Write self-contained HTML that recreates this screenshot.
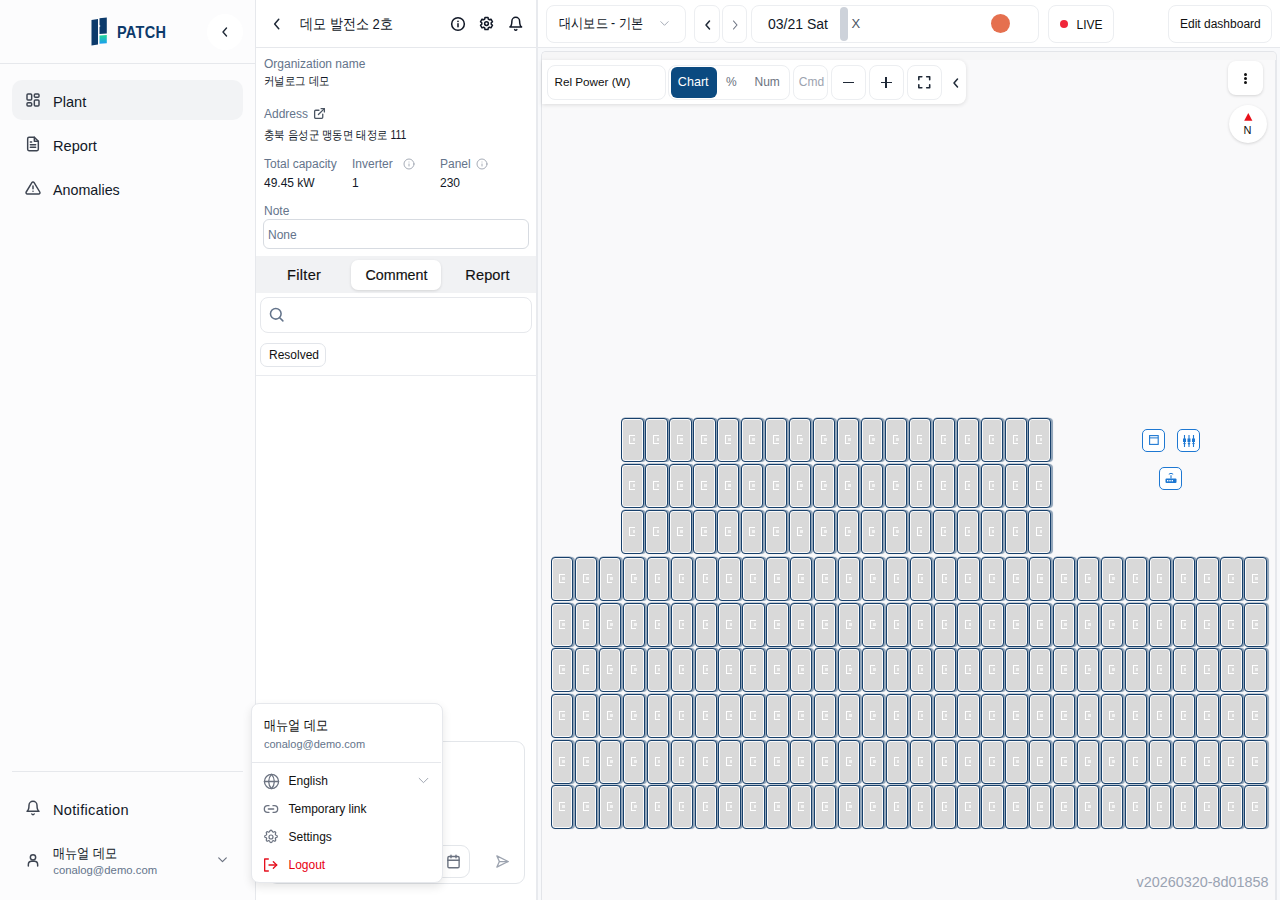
<!DOCTYPE html>
<html><head><meta charset="utf-8">
<style>
*{box-sizing:border-box;margin:0;padding:0}
html,body{width:1280px;height:900px;overflow:hidden;background:#fff;font-family:"Liberation Sans",sans-serif;color:#111}
.a{position:absolute}
.t{position:absolute;white-space:nowrap;line-height:1}
svg.i{position:absolute;overflow:visible;fill:none;stroke:currentColor;stroke-linecap:round;stroke-linejoin:round}
#sb{left:0;top:0;width:256px;height:900px;background:#fcfcfd;border-right:1px solid #e6e8ec}
#ip{left:256px;top:0;width:282px;height:900px;background:#fff;border-right:2px solid #e8eaee}
#mn{left:538px;top:0;width:742px;height:900px;background:#f8f9fb}
.box{position:absolute;background:#fff;border:1px solid #eceef1;border-radius:8px}
.g{color:#64748b}
.p{position:absolute;width:22.4px;height:44.2px;background:#d9d9d9;border:1.3px solid #17406b;border-radius:4px;box-shadow:inset 0 0 0 1px #fafafa,1.3px 0 0.7px #8fa3b8,0.3px -0.6px 0.5px #8fa3b8}
.p::after{content:"";box-sizing:border-box;position:absolute;left:7px;top:16.2px;width:5.5px;height:9px;border:1.7px solid #fff;border-right:0}
.p::before{content:"";position:absolute;left:10.3px;top:19px;width:2.5px;height:3px;background:#f2f2f2}
.k{transform:scaleX(0.87);transform-origin:0 0}
</style></head><body>

<!-- SIDEBAR -->
<div id="sb" class="a">
  <div class="a" style="left:0;top:63px;width:255px;height:1px;background:#e6e8ec"></div>
  <!-- logo -->
  <svg class="a" style="left:91px;top:17px" width="17" height="29" viewBox="0 0 17 29">
    <path d="M0.5 3 L7 2 L7 27.5 L0.5 28.5 Z" fill="#0c3a6b"/>
    <path d="M8.5 1.2 L15.8 0.6 L15.8 16.5 L8.5 17 L8.5 10 L9.5 9 L8.5 8 Z" fill="#0c3a6b"/>
    <defs><linearGradient id="lg" x1="0" y1="0" x2="0" y2="1"><stop offset="0" stop-color="#22d896"/><stop offset="1" stop-color="#1b9cf2"/></linearGradient></defs>
    <path d="M8.5 18.5 L15.8 18 L15.8 26.2 L8.5 26.8 Z" fill="url(#lg)"/>
  </svg>
  <div class="t" style="left:117px;top:23.8px;font-size:16.5px;font-weight:bold;color:#0c3a6b;transform:scaleX(0.88);transform-origin:0 0;letter-spacing:0.3px">PATCH</div>
  <div class="a" style="left:207px;top:14px;width:36px;height:36px;border-radius:50%;background:#fff"></div>
  <svg class="i" style="left:219px;top:26px;color:#1f2937" width="12" height="12" viewBox="0 0 24 24" stroke-width="2.8"><path d="M15 4 L8 12 L15 20"/></svg>

  <!-- nav -->
  <div class="a" style="left:12px;top:80px;width:231px;height:40px;border-radius:10px;background:#f2f3f5"></div>
  <svg class="i" style="left:25px;top:92px;color:#3d4451" width="16" height="16" viewBox="0 0 24 24" stroke-width="2.2">
    <rect x="3" y="3" width="7" height="9" rx="1.5"/><rect x="14" y="3" width="7" height="5" rx="1.5"/><rect x="14" y="12" width="7" height="9" rx="1.5"/><rect x="3" y="16" width="7" height="5" rx="1.5"/></svg>
  <div class="t" style="left:53px;top:95px;font-size:14.6px;color:#111827">Plant</div>

  <svg class="i" style="left:24.5px;top:136px;color:#3d4451" width="16" height="16" viewBox="0 0 24 24" stroke-width="2.2">
    <path d="M14 2H6a2 2 0 0 0-2 2v16a2 2 0 0 0 2 2h12a2 2 0 0 0 2-2V8z"/><path d="M14 2v6h6"/><path d="M16 13H8"/><path d="M16 17H8"/><path d="M10 9H8"/></svg>
  <div class="t" style="left:53px;top:138.8px;font-size:14.6px;color:#111827">Report</div>

  <svg class="i" style="left:24.5px;top:180px;color:#3d4451" width="16" height="16" viewBox="0 0 24 24" stroke-width="2.2">
    <path d="M10.3 3.9 1.8 18a2 2 0 0 0 1.7 3h17a2 2 0 0 0 1.7-3L13.7 3.9a2 2 0 0 0-3.4 0z"/><path d="M12 9v4"/><path d="M12 17h.01"/></svg>
  <div class="t" style="left:53px;top:182.8px;font-size:14.3px;color:#111827">Anomalies</div>

  <div class="a" style="left:12px;top:771px;width:231px;height:1px;background:#e6e8ec"></div>
  <svg class="i" style="left:25px;top:800px;color:#3d4451" width="16" height="16" viewBox="0 0 24 24" stroke-width="2.2">
    <path d="M6 8a6 6 0 0 1 12 0c0 7 3 9 3 9H3s3-2 3-9"/><path d="M10.3 21a1.94 1.94 0 0 0 3.4 0"/></svg>
  <div class="t" style="left:53px;top:802.6px;font-size:14.6px;color:#111827;letter-spacing:0.3px">Notification</div>

  <svg class="i" style="left:25px;top:852px;color:#3d4451" width="16" height="16" viewBox="0 0 24 24" stroke-width="2.2">
    <circle cx="12" cy="8" r="4"/><path d="M5 21v-2a5 5 0 0 1 5-5h4a5 5 0 0 1 5 5v2"/></svg>
  <div class="t k" style="left:53px;top:846px;font-size:14px;color:#111827">매뉴얼 데모</div>
  <div class="t g" style="left:53.3px;top:865px;font-size:11.3px">conalog@demo.com</div>
  <svg class="i" style="left:216px;top:853px;color:#6b7280" width="13" height="13" viewBox="0 0 24 24" stroke-width="2.2"><path d="M5 9l7 7 7-7"/></svg>
</div>

<!-- INFO PANEL -->
<div id="ip" class="a">
  <div class="a" style="left:0;top:47px;width:280px;height:1px;background:#e6e8ec"></div>
  <svg class="i" style="left:14px;top:17px;color:#1f2937" width="14" height="14" viewBox="0 0 24 24" stroke-width="2.6"><path d="M15 4 L8 12 L15 20"/></svg>
  <div class="t k" style="left:44px;top:16px;font-size:15px;color:#111827">데모 발전소 2호</div>
  <svg class="i" style="left:194px;top:15.7px;color:#111827" width="16" height="16" viewBox="0 0 24 24" stroke-width="2.3"><circle cx="12" cy="12" r="9.5"/><path d="M12 16v-4.5"/><path d="M12 8h.01" stroke-width="2.6"/></svg>
  <svg class="i" style="left:222.5px;top:15.5px;color:#111827" width="15" height="15" viewBox="0 0 24 24" stroke-width="2.4"><path d="M9.15 4.95 L9.58 2.30 L14.42 2.30 L14.85 4.95 L16.68 6.01 L19.19 5.05 L21.61 9.24 L19.53 10.94 L19.53 13.06 L21.61 14.76 L19.19 18.95 L16.68 17.99 L14.85 19.05 L14.42 21.70 L9.58 21.70 L9.15 19.05 L7.32 17.99 L4.81 18.95 L2.39 14.76 L4.47 13.06 L4.47 10.94 L2.39 9.24 L4.81 5.05 L7.32 6.01Z"/><circle cx="12" cy="12" r="3"/></svg>
  <svg class="i" style="left:251.8px;top:16px;color:#111827" width="15.5" height="15.5" viewBox="0 0 24 24" stroke-width="2.3"><path d="M6 8a6 6 0 0 1 12 0c0 7 3 9 3 9H3s3-2 3-9"/><path d="M10.3 21a1.94 1.94 0 0 0 3.4 0"/></svg>

  <div class="t g" style="left:8px;top:57.8px;font-size:12px">Organization name</div>
  <div class="t k" style="left:8px;top:75px;font-size:12px;color:#111827">커널로그 데모</div>
  <div class="t g" style="left:8px;top:108.3px;font-size:12px">Address</div>
  <svg class="i" style="left:57px;top:107px;color:#4b5563" width="13" height="13" viewBox="0 0 24 24" stroke-width="2.4"><path d="M18 13v6a2 2 0 0 1-2 2H5a2 2 0 0 1-2-2V8a2 2 0 0 1 2-2h6"/><path d="M15 3h6v6"/><path d="M10 14 21 3"/></svg>
  <div class="t k" style="left:8px;top:128.5px;font-size:12px;color:#111827">충북 음성군 맹동면 태정로 111</div>

  <div class="t g" style="left:8px;top:158.3px;font-size:12px">Total capacity</div>
  <div class="t g" style="left:96px;top:158.3px;font-size:12px">Inverter</div>
  <svg class="i" style="left:146.5px;top:157.8px;color:#9ca3af" width="12" height="12" viewBox="0 0 24 24" stroke-width="1.8"><circle cx="12" cy="12" r="10"/><path d="M12 16v-4"/><path d="M12 8h.01"/></svg>
  <div class="t g" style="left:184px;top:158.3px;font-size:12px">Panel</div>
  <svg class="i" style="left:219.7px;top:157.8px;color:#9ca3af" width="12" height="12" viewBox="0 0 24 24" stroke-width="1.8"><circle cx="12" cy="12" r="10"/><path d="M12 16v-4"/><path d="M12 8h.01"/></svg>
  <div class="t" style="left:8px;top:176.5px;font-size:12px;color:#111827">49.45 kW</div>
  <div class="t" style="left:96px;top:176.5px;font-size:12px;color:#111827">1</div>
  <div class="t" style="left:184px;top:176.5px;font-size:12px;color:#111827">230</div>

  <div class="t g" style="left:8px;top:204.5px;font-size:12px">Note</div>
  <div class="a" style="left:7px;top:219px;width:266px;height:30px;border:1px solid #d7dbe1;border-radius:6px"></div>
  <div class="t g" style="left:12px;top:228.5px;font-size:12px">None</div>

  <div class="a" style="left:0;top:256px;width:280px;height:37px;background:#f1f2f4"></div>
  <div class="a" style="left:95px;top:260px;width:90px;height:30px;background:#fff;border-radius:7px;box-shadow:0 1px 3px rgba(0,0,0,0.12)"></div>
  <div class="t" style="left:31px;top:268.2px;font-size:14.6px;color:#111;-webkit-text-stroke:0.15px #111;letter-spacing:0.3px">Filter</div>
  <div class="t" style="left:109.5px;top:268.2px;font-size:14.3px;color:#111;-webkit-text-stroke:0.15px #111">Comment</div>
  <div class="t" style="left:209.3px;top:268.2px;font-size:14.6px;color:#111;-webkit-text-stroke:0.15px #111;letter-spacing:0.1px">Report</div>

  <div class="a" style="left:4px;top:297px;width:271.5px;height:36px;border:1px solid #e6e8ec;border-radius:8px"></div>
  <svg class="i" style="left:11.8px;top:306px;color:#64748b" width="17" height="17" viewBox="0 0 24 24" stroke-width="2.2"><circle cx="11" cy="11" r="7.5"/><path d="M21 21l-4.5-4.5"/></svg>
  <div class="a" style="left:4px;top:343px;width:66px;height:24px;border:1px solid #e2e5ea;border-radius:7px"></div>
  <div class="t" style="left:13px;top:348.8px;font-size:12px;color:#111">Resolved</div>
  <div class="a" style="left:0;top:375px;width:280px;height:1px;background:#e9ebef"></div>

  <!-- comment box -->
  <div class="a" style="left:12px;top:741px;width:256.5px;height:143px;border:1px solid #e3e6ea;border-radius:9px"></div>
  <div class="a" style="left:146px;top:845px;width:68px;height:33px;border:1px solid #e3e6ea;border-radius:9px"></div>
  <svg class="i" style="left:189.5px;top:853.8px;color:#6b7280" width="15" height="15" viewBox="0 0 24 24" stroke-width="2.2"><rect x="3" y="4" width="18" height="18" rx="2"/><path d="M16 2v4M8 2v4M3 10h18"/></svg>
  <svg class="i" style="left:239px;top:854px;color:#9ca3af" width="15" height="15" viewBox="0 0 24 24" stroke-width="2"><path d="M3 3l18 9-18 9 4-9z"/><path d="M7 12h14"/></svg>
</div>

<!-- MAIN -->
<div id="mn" class="a">
  <div class="a" style="left:0;top:0;width:742px;height:48px;background:#fff;border-bottom:1px solid #e6e8ec"></div>
  <!-- header -->
  <div class="box" style="left:8px;top:4.5px;width:139.5px;height:38px"></div>
  <div class="t k" style="left:21px;top:16px;font-size:14px;color:#111827">대시보드 - 기본</div>
  <svg class="i" style="left:121px;top:18px;color:#9ca3af" width="11" height="11" viewBox="0 0 24 24" stroke-width="2"><path d="M4 8l8 8 8-8"/></svg>
  <div class="box" style="left:156px;top:4.5px;width:25.5px;height:38px;border-radius:7px"></div>
  <svg class="i" style="left:163.5px;top:19px;color:#1f2937" width="12" height="12" viewBox="0 0 24 24" stroke-width="3"><path d="M15 4 L8 12 L15 20"/></svg>
  <div class="box" style="left:183.8px;top:4.5px;width:25px;height:38px;border-radius:7px"></div>
  <svg class="i" style="left:190.5px;top:18.5px;color:#6b7280" width="12" height="12" viewBox="0 0 24 24" stroke-width="2.2"><path d="M9 4 L16 12 L9 20"/></svg>
  <div class="box" style="left:213px;top:4.5px;width:288px;height:38px"></div>
  <div class="t" style="left:230px;top:17px;font-size:14px;color:#111827">03/21 Sat</div>
  <div class="a" style="left:302px;top:7px;width:7.5px;height:33.5px;border-radius:4px;background:#cdd2da"></div>
  <div class="t" style="left:313.5px;top:17px;font-size:13px;color:#4b5563">X</div>
  <div class="a" style="left:453px;top:14px;width:19px;height:19px;border-radius:50%;background:#e5704f"></div>
  <div class="box" style="left:509.5px;top:4.5px;width:66.5px;height:38px"></div>
  <div class="a" style="left:522px;top:19.5px;width:8px;height:8px;border-radius:50%;background:#f0263a"></div>
  <div class="t" style="left:538.5px;top:18.5px;font-size:12px;color:#111">LIVE</div>
  <div class="box" style="left:629.5px;top:4.5px;width:104px;height:38px"></div>
  <div class="t" style="left:642px;top:18.2px;font-size:12px;color:#111">Edit dashboard</div>

  <!-- map container -->
  <div class="a" style="left:3px;top:51px;width:736px;height:860px;background:#f9f9fa;border:1px solid #e3e5e9;border-right:2px solid #e6e8ec;border-radius:5px"></div>
  <div class="a" style="left:4px;top:52px;width:734px;height:8px;background:#f6f6f7;border-radius:4px 4px 0 0"></div>
  <!-- toolbar -->
  <div class="a" style="left:4px;top:60px;width:423.5px;height:44px;background:#fff;border-radius:0 8px 8px 0;box-shadow:0 1px 4px rgba(0,0,0,0.12)"></div>
  <div class="box" style="left:8.5px;top:64.5px;width:119px;height:35px"></div>
  <div class="t" style="left:16.5px;top:75.8px;font-size:11.7px;color:#111">Rel Power (W)</div>
  <div class="box" style="left:130px;top:64.5px;width:121.5px;height:35px"></div>
  <div class="a" style="left:132.75px;top:67px;width:46.25px;height:30.5px;border-radius:6px;background:#0b4a80"></div>
  <div class="t" style="left:139.8px;top:76.1px;font-size:12.6px;color:#fff">Chart</div>
  <div class="t" style="left:188px;top:76px;font-size:12px;color:#6b7280">%</div>
  <div class="t" style="left:216.5px;top:76px;font-size:12px;color:#6b7280">Num</div>
  <div class="box" style="left:255px;top:64.5px;width:35px;height:35px"></div>
  <div class="t" style="left:260.75px;top:76px;font-size:12px;color:#9ca3af">Cmd</div>
  <div class="box" style="left:292.75px;top:64.5px;width:35px;height:35px"></div>
  <div class="a" style="left:305px;top:81.6px;width:11px;height:1.6px;background:#1f2937"></div>
  <div class="box" style="left:330.75px;top:64.5px;width:35px;height:35px"></div>
  <div class="a" style="left:342.5px;top:81.7px;width:11px;height:1.6px;background:#1f2937"></div>
  <div class="a" style="left:347.2px;top:76.9px;width:1.6px;height:11px;background:#1f2937"></div>
  <div class="box" style="left:368.75px;top:64.5px;width:35px;height:35px"></div>
  <svg class="i" style="left:379px;top:75.2px;color:#1f2937" width="14.5" height="14.5" viewBox="0 0 24 24" stroke-width="2.6" stroke-linecap="butt"><path d="M3 8V3h5M16 3h5v5M21 16v5h-5M8 21H3v-5"/></svg>
  <svg class="i" style="left:412px;top:76.5px;color:#1f2937" width="12" height="12" viewBox="0 0 24 24" stroke-width="3"><path d="M15 4 L8 12 L15 20"/></svg>

  <div class="a" style="left:690px;top:61px;width:35px;height:34px;background:#fff;border-radius:8px;box-shadow:0 1px 3px rgba(0,0,0,0.15)"></div>
  <div class="a" style="left:706px;top:72.5px;width:3px;height:3px;border-radius:50%;background:#111"></div>
  <div class="a" style="left:706px;top:76.5px;width:3px;height:3px;border-radius:50%;background:#111"></div>
  <div class="a" style="left:706px;top:80.5px;width:3px;height:3px;border-radius:50%;background:#111"></div>
  <div class="a" style="left:690.5px;top:105px;width:38px;height:38px;background:#fff;border-radius:50%;box-shadow:0 1px 3px rgba(0,0,0,0.15)"></div>
  <svg class="a" style="left:705.5px;top:113px" width="9" height="8" viewBox="0 0 9 8"><path d="M4.3 0 L8.4 7.7 L0.2 7.7 Z" fill="#e8101a"/></svg>
  <div class="t" style="left:705.5px;top:124.9px;font-size:11px;color:#111">N</div>

  <div class="t" style="left:598.5px;top:874.8px;font-size:14.4px;color:#9aa3b2;letter-spacing:0px">v20260320-8d01858</div>
<div class="p" style="left:83.30px;top:418.30px"></div>
<div class="p" style="left:107.25px;top:418.30px"></div>
<div class="p" style="left:131.20px;top:418.30px"></div>
<div class="p" style="left:155.15px;top:418.30px"></div>
<div class="p" style="left:179.10px;top:418.30px"></div>
<div class="p" style="left:203.05px;top:418.30px"></div>
<div class="p" style="left:227.00px;top:418.30px"></div>
<div class="p" style="left:250.95px;top:418.30px"></div>
<div class="p" style="left:274.90px;top:418.30px"></div>
<div class="p" style="left:298.85px;top:418.30px"></div>
<div class="p" style="left:322.80px;top:418.30px"></div>
<div class="p" style="left:346.75px;top:418.30px"></div>
<div class="p" style="left:370.70px;top:418.30px"></div>
<div class="p" style="left:394.65px;top:418.30px"></div>
<div class="p" style="left:418.60px;top:418.30px"></div>
<div class="p" style="left:442.55px;top:418.30px"></div>
<div class="p" style="left:466.50px;top:418.30px"></div>
<div class="p" style="left:490.45px;top:418.30px"></div>
<div class="p" style="left:83.30px;top:464.30px"></div>
<div class="p" style="left:107.25px;top:464.30px"></div>
<div class="p" style="left:131.20px;top:464.30px"></div>
<div class="p" style="left:155.15px;top:464.30px"></div>
<div class="p" style="left:179.10px;top:464.30px"></div>
<div class="p" style="left:203.05px;top:464.30px"></div>
<div class="p" style="left:227.00px;top:464.30px"></div>
<div class="p" style="left:250.95px;top:464.30px"></div>
<div class="p" style="left:274.90px;top:464.30px"></div>
<div class="p" style="left:298.85px;top:464.30px"></div>
<div class="p" style="left:322.80px;top:464.30px"></div>
<div class="p" style="left:346.75px;top:464.30px"></div>
<div class="p" style="left:370.70px;top:464.30px"></div>
<div class="p" style="left:394.65px;top:464.30px"></div>
<div class="p" style="left:418.60px;top:464.30px"></div>
<div class="p" style="left:442.55px;top:464.30px"></div>
<div class="p" style="left:466.50px;top:464.30px"></div>
<div class="p" style="left:490.45px;top:464.30px"></div>
<div class="p" style="left:83.30px;top:510.20px"></div>
<div class="p" style="left:107.25px;top:510.20px"></div>
<div class="p" style="left:131.20px;top:510.20px"></div>
<div class="p" style="left:155.15px;top:510.20px"></div>
<div class="p" style="left:179.10px;top:510.20px"></div>
<div class="p" style="left:203.05px;top:510.20px"></div>
<div class="p" style="left:227.00px;top:510.20px"></div>
<div class="p" style="left:250.95px;top:510.20px"></div>
<div class="p" style="left:274.90px;top:510.20px"></div>
<div class="p" style="left:298.85px;top:510.20px"></div>
<div class="p" style="left:322.80px;top:510.20px"></div>
<div class="p" style="left:346.75px;top:510.20px"></div>
<div class="p" style="left:370.70px;top:510.20px"></div>
<div class="p" style="left:394.65px;top:510.20px"></div>
<div class="p" style="left:418.60px;top:510.20px"></div>
<div class="p" style="left:442.55px;top:510.20px"></div>
<div class="p" style="left:466.50px;top:510.20px"></div>
<div class="p" style="left:490.45px;top:510.20px"></div>
<div class="p" style="left:13.10px;top:556.90px"></div>
<div class="p" style="left:37.00px;top:556.90px"></div>
<div class="p" style="left:60.90px;top:556.90px"></div>
<div class="p" style="left:84.80px;top:556.90px"></div>
<div class="p" style="left:108.70px;top:556.90px"></div>
<div class="p" style="left:132.60px;top:556.90px"></div>
<div class="p" style="left:156.50px;top:556.90px"></div>
<div class="p" style="left:180.40px;top:556.90px"></div>
<div class="p" style="left:204.30px;top:556.90px"></div>
<div class="p" style="left:228.20px;top:556.90px"></div>
<div class="p" style="left:252.10px;top:556.90px"></div>
<div class="p" style="left:276.00px;top:556.90px"></div>
<div class="p" style="left:299.90px;top:556.90px"></div>
<div class="p" style="left:323.80px;top:556.90px"></div>
<div class="p" style="left:347.70px;top:556.90px"></div>
<div class="p" style="left:371.60px;top:556.90px"></div>
<div class="p" style="left:395.50px;top:556.90px"></div>
<div class="p" style="left:419.40px;top:556.90px"></div>
<div class="p" style="left:443.30px;top:556.90px"></div>
<div class="p" style="left:467.20px;top:556.90px"></div>
<div class="p" style="left:491.10px;top:556.90px"></div>
<div class="p" style="left:515.00px;top:556.90px"></div>
<div class="p" style="left:538.90px;top:556.90px"></div>
<div class="p" style="left:562.80px;top:556.90px"></div>
<div class="p" style="left:586.70px;top:556.90px"></div>
<div class="p" style="left:610.60px;top:556.90px"></div>
<div class="p" style="left:634.50px;top:556.90px"></div>
<div class="p" style="left:658.40px;top:556.90px"></div>
<div class="p" style="left:682.30px;top:556.90px"></div>
<div class="p" style="left:706.20px;top:556.90px"></div>
<div class="p" style="left:13.10px;top:602.58px"></div>
<div class="p" style="left:37.00px;top:602.58px"></div>
<div class="p" style="left:60.90px;top:602.58px"></div>
<div class="p" style="left:84.80px;top:602.58px"></div>
<div class="p" style="left:108.70px;top:602.58px"></div>
<div class="p" style="left:132.60px;top:602.58px"></div>
<div class="p" style="left:156.50px;top:602.58px"></div>
<div class="p" style="left:180.40px;top:602.58px"></div>
<div class="p" style="left:204.30px;top:602.58px"></div>
<div class="p" style="left:228.20px;top:602.58px"></div>
<div class="p" style="left:252.10px;top:602.58px"></div>
<div class="p" style="left:276.00px;top:602.58px"></div>
<div class="p" style="left:299.90px;top:602.58px"></div>
<div class="p" style="left:323.80px;top:602.58px"></div>
<div class="p" style="left:347.70px;top:602.58px"></div>
<div class="p" style="left:371.60px;top:602.58px"></div>
<div class="p" style="left:395.50px;top:602.58px"></div>
<div class="p" style="left:419.40px;top:602.58px"></div>
<div class="p" style="left:443.30px;top:602.58px"></div>
<div class="p" style="left:467.20px;top:602.58px"></div>
<div class="p" style="left:491.10px;top:602.58px"></div>
<div class="p" style="left:515.00px;top:602.58px"></div>
<div class="p" style="left:538.90px;top:602.58px"></div>
<div class="p" style="left:562.80px;top:602.58px"></div>
<div class="p" style="left:586.70px;top:602.58px"></div>
<div class="p" style="left:610.60px;top:602.58px"></div>
<div class="p" style="left:634.50px;top:602.58px"></div>
<div class="p" style="left:658.40px;top:602.58px"></div>
<div class="p" style="left:682.30px;top:602.58px"></div>
<div class="p" style="left:706.20px;top:602.58px"></div>
<div class="p" style="left:13.10px;top:648.26px"></div>
<div class="p" style="left:37.00px;top:648.26px"></div>
<div class="p" style="left:60.90px;top:648.26px"></div>
<div class="p" style="left:84.80px;top:648.26px"></div>
<div class="p" style="left:108.70px;top:648.26px"></div>
<div class="p" style="left:132.60px;top:648.26px"></div>
<div class="p" style="left:156.50px;top:648.26px"></div>
<div class="p" style="left:180.40px;top:648.26px"></div>
<div class="p" style="left:204.30px;top:648.26px"></div>
<div class="p" style="left:228.20px;top:648.26px"></div>
<div class="p" style="left:252.10px;top:648.26px"></div>
<div class="p" style="left:276.00px;top:648.26px"></div>
<div class="p" style="left:299.90px;top:648.26px"></div>
<div class="p" style="left:323.80px;top:648.26px"></div>
<div class="p" style="left:347.70px;top:648.26px"></div>
<div class="p" style="left:371.60px;top:648.26px"></div>
<div class="p" style="left:395.50px;top:648.26px"></div>
<div class="p" style="left:419.40px;top:648.26px"></div>
<div class="p" style="left:443.30px;top:648.26px"></div>
<div class="p" style="left:467.20px;top:648.26px"></div>
<div class="p" style="left:491.10px;top:648.26px"></div>
<div class="p" style="left:515.00px;top:648.26px"></div>
<div class="p" style="left:538.90px;top:648.26px"></div>
<div class="p" style="left:562.80px;top:648.26px"></div>
<div class="p" style="left:586.70px;top:648.26px"></div>
<div class="p" style="left:610.60px;top:648.26px"></div>
<div class="p" style="left:634.50px;top:648.26px"></div>
<div class="p" style="left:658.40px;top:648.26px"></div>
<div class="p" style="left:682.30px;top:648.26px"></div>
<div class="p" style="left:706.20px;top:648.26px"></div>
<div class="p" style="left:13.10px;top:693.94px"></div>
<div class="p" style="left:37.00px;top:693.94px"></div>
<div class="p" style="left:60.90px;top:693.94px"></div>
<div class="p" style="left:84.80px;top:693.94px"></div>
<div class="p" style="left:108.70px;top:693.94px"></div>
<div class="p" style="left:132.60px;top:693.94px"></div>
<div class="p" style="left:156.50px;top:693.94px"></div>
<div class="p" style="left:180.40px;top:693.94px"></div>
<div class="p" style="left:204.30px;top:693.94px"></div>
<div class="p" style="left:228.20px;top:693.94px"></div>
<div class="p" style="left:252.10px;top:693.94px"></div>
<div class="p" style="left:276.00px;top:693.94px"></div>
<div class="p" style="left:299.90px;top:693.94px"></div>
<div class="p" style="left:323.80px;top:693.94px"></div>
<div class="p" style="left:347.70px;top:693.94px"></div>
<div class="p" style="left:371.60px;top:693.94px"></div>
<div class="p" style="left:395.50px;top:693.94px"></div>
<div class="p" style="left:419.40px;top:693.94px"></div>
<div class="p" style="left:443.30px;top:693.94px"></div>
<div class="p" style="left:467.20px;top:693.94px"></div>
<div class="p" style="left:491.10px;top:693.94px"></div>
<div class="p" style="left:515.00px;top:693.94px"></div>
<div class="p" style="left:538.90px;top:693.94px"></div>
<div class="p" style="left:562.80px;top:693.94px"></div>
<div class="p" style="left:586.70px;top:693.94px"></div>
<div class="p" style="left:610.60px;top:693.94px"></div>
<div class="p" style="left:634.50px;top:693.94px"></div>
<div class="p" style="left:658.40px;top:693.94px"></div>
<div class="p" style="left:682.30px;top:693.94px"></div>
<div class="p" style="left:706.20px;top:693.94px"></div>
<div class="p" style="left:13.10px;top:739.62px"></div>
<div class="p" style="left:37.00px;top:739.62px"></div>
<div class="p" style="left:60.90px;top:739.62px"></div>
<div class="p" style="left:84.80px;top:739.62px"></div>
<div class="p" style="left:108.70px;top:739.62px"></div>
<div class="p" style="left:132.60px;top:739.62px"></div>
<div class="p" style="left:156.50px;top:739.62px"></div>
<div class="p" style="left:180.40px;top:739.62px"></div>
<div class="p" style="left:204.30px;top:739.62px"></div>
<div class="p" style="left:228.20px;top:739.62px"></div>
<div class="p" style="left:252.10px;top:739.62px"></div>
<div class="p" style="left:276.00px;top:739.62px"></div>
<div class="p" style="left:299.90px;top:739.62px"></div>
<div class="p" style="left:323.80px;top:739.62px"></div>
<div class="p" style="left:347.70px;top:739.62px"></div>
<div class="p" style="left:371.60px;top:739.62px"></div>
<div class="p" style="left:395.50px;top:739.62px"></div>
<div class="p" style="left:419.40px;top:739.62px"></div>
<div class="p" style="left:443.30px;top:739.62px"></div>
<div class="p" style="left:467.20px;top:739.62px"></div>
<div class="p" style="left:491.10px;top:739.62px"></div>
<div class="p" style="left:515.00px;top:739.62px"></div>
<div class="p" style="left:538.90px;top:739.62px"></div>
<div class="p" style="left:562.80px;top:739.62px"></div>
<div class="p" style="left:586.70px;top:739.62px"></div>
<div class="p" style="left:610.60px;top:739.62px"></div>
<div class="p" style="left:634.50px;top:739.62px"></div>
<div class="p" style="left:658.40px;top:739.62px"></div>
<div class="p" style="left:682.30px;top:739.62px"></div>
<div class="p" style="left:706.20px;top:739.62px"></div>
<div class="p" style="left:13.10px;top:785.30px"></div>
<div class="p" style="left:37.00px;top:785.30px"></div>
<div class="p" style="left:60.90px;top:785.30px"></div>
<div class="p" style="left:84.80px;top:785.30px"></div>
<div class="p" style="left:108.70px;top:785.30px"></div>
<div class="p" style="left:132.60px;top:785.30px"></div>
<div class="p" style="left:156.50px;top:785.30px"></div>
<div class="p" style="left:180.40px;top:785.30px"></div>
<div class="p" style="left:204.30px;top:785.30px"></div>
<div class="p" style="left:228.20px;top:785.30px"></div>
<div class="p" style="left:252.10px;top:785.30px"></div>
<div class="p" style="left:276.00px;top:785.30px"></div>
<div class="p" style="left:299.90px;top:785.30px"></div>
<div class="p" style="left:323.80px;top:785.30px"></div>
<div class="p" style="left:347.70px;top:785.30px"></div>
<div class="p" style="left:371.60px;top:785.30px"></div>
<div class="p" style="left:395.50px;top:785.30px"></div>
<div class="p" style="left:419.40px;top:785.30px"></div>
<div class="p" style="left:443.30px;top:785.30px"></div>
<div class="p" style="left:467.20px;top:785.30px"></div>
<div class="p" style="left:491.10px;top:785.30px"></div>
<div class="p" style="left:515.00px;top:785.30px"></div>
<div class="p" style="left:538.90px;top:785.30px"></div>
<div class="p" style="left:562.80px;top:785.30px"></div>
<div class="p" style="left:586.70px;top:785.30px"></div>
<div class="p" style="left:610.60px;top:785.30px"></div>
<div class="p" style="left:634.50px;top:785.30px"></div>
<div class="p" style="left:658.40px;top:785.30px"></div>
<div class="p" style="left:682.30px;top:785.30px"></div>
<div class="p" style="left:706.20px;top:785.30px"></div>
  <div class="a" style="left:604.1px;top:429px;width:22.5px;height:22.7px;background:#fff;border:1.5px solid #1e78d2;border-radius:5px"></div>
  <svg class="a" style="left:610.75px;top:435.4px" width="10" height="10" viewBox="0 0 10 10"><rect x="0.6" y="0.6" width="8.6" height="8.8" fill="none" stroke="#1e78d2" stroke-width="1.1"/><path d="M0.6 2.9h8.6" stroke="#1e78d2" stroke-width="1"/></svg>
  <div class="a" style="left:639.3px;top:429.3px;width:22.5px;height:22.5px;background:#fff;border:1.5px solid #1e78d2;border-radius:5px"></div>
  <svg class="a" style="left:644.5px;top:434.5px" width="12" height="12" viewBox="0 0 12 12"><g stroke="#1e78d2" stroke-width="1.1"><path d="M1.5 0v12M6 0v12M10.5 0v12"/></g><g fill="#1e78d2"><rect x="0" y="3.5" width="3" height="3.5"/><rect x="4.5" y="3.5" width="3" height="3.5"/><rect x="9" y="3.5" width="3" height="3.5"/><path d="M0 8h3l-1.5 2z M4.5 8h3l-1.5 2z M9 8h3l-1.5 2z"/></g></svg>
  <div class="a" style="left:621.2px;top:467px;width:22.5px;height:22.6px;background:#fff;border:1.5px solid #1e78d2;border-radius:5px"></div>
  <svg class="a" style="left:626.5px;top:472px" width="12" height="12" viewBox="0 0 12 12"><rect x="0.5" y="6.5" width="11" height="4.5" rx="1" fill="#1e78d2"/><path d="M6 6.5V3.2" stroke="#1e78d2" stroke-width="1.1"/><path d="M3.8 2.2q2.2-1.8 4.4 0" stroke="#1e78d2" stroke-width="1" fill="none"/><g fill="#fff"><rect x="2" y="8" width="1.4" height="1.4"/><rect x="4.3" y="8" width="1.4" height="1.4"/><rect x="6.6" y="8" width="1.4" height="1.4"/></g></svg>

</div>


<!-- USER MENU -->
<div class="a" style="left:251px;top:703.4px;width:191.5px;height:180px;background:#fff;border:1px solid #e6e8ec;border-radius:8px;box-shadow:0 4px 10px rgba(0,0,0,0.10)">
  <div class="t k" style="left:12px;top:13.6px;font-size:14px;color:#111">매뉴얼 데모</div>
  <div class="t g" style="left:12px;top:35px;font-size:11px">conalog@demo.com</div>
  <div class="a" style="left:0;top:57.5px;width:189px;height:1px;background:#e6e8ec"></div>
  <svg class="i" style="left:10.5px;top:68.8px;color:#6b7280" width="17" height="17" viewBox="0 0 24 24" stroke-width="1.8"><circle cx="12" cy="12" r="10"/><path d="M12 2a14.5 14.5 0 0 0 0 20 14.5 14.5 0 0 0 0-20"/><path d="M2 12h20"/></svg>
  <div class="t" style="left:36.5px;top:71px;font-size:12px;color:#111">English</div>
  <svg class="i" style="left:164.5px;top:70px;color:#9ca3af" width="13" height="13" viewBox="0 0 24 24" stroke-width="1.8"><path d="M4 8l8 8 8-8"/></svg>
  <svg class="i" style="left:11px;top:97px;color:#6b7280" width="16" height="16" viewBox="0 0 24 24" stroke-width="2"><path d="M9 17H7A5 5 0 0 1 7 7h2"/><path d="M15 7h2a5 5 0 1 1 0 10h-2"/><line x1="8" x2="16" y1="12" y2="12"/></svg>
  <div class="t" style="left:36.5px;top:98.8px;font-size:12px;color:#111">Temporary link</div>
  <svg class="i" style="left:11px;top:125px;color:#6b7280" width="16" height="16" viewBox="0 0 24 24" stroke-width="1.8"><path d="M10.3 3.3a1.7 1.7 0 0 1 3.4 0 1.7 1.7 0 0 0 2.6 1.1 1.7 1.7 0 0 1 2.4 2.4 1.7 1.7 0 0 0 1.1 2.6 1.7 1.7 0 0 1 0 3.4 1.7 1.7 0 0 0-1.1 2.6 1.7 1.7 0 0 1-2.4 2.4 1.7 1.7 0 0 0-2.6 1.1 1.7 1.7 0 0 1-3.4 0 1.7 1.7 0 0 0-2.6-1.1 1.7 1.7 0 0 1-2.4-2.4 1.7 1.7 0 0 0-1.1-2.6 1.7 1.7 0 0 1 0-3.4 1.7 1.7 0 0 0 1.1-2.6 1.7 1.7 0 0 1 2.4-2.4 1.7 1.7 0 0 0 2.6-1.1z"/><circle cx="12" cy="12" r="3"/></svg>
  <div class="t" style="left:36.5px;top:126.6px;font-size:12px;color:#111">Settings</div>
  <svg class="i" style="left:11px;top:153px;color:#e5101e" width="16" height="16" viewBox="0 0 24 24" stroke-width="2"><path d="M8 3H2.5v18H8"/><path d="M15.5 7l5 5-5 5"/><path d="M20.5 12H9"/></svg>
  <div class="t" style="left:36.5px;top:154.6px;font-size:12px;color:#e8000f">Logout</div>
</div>
</body></html>
